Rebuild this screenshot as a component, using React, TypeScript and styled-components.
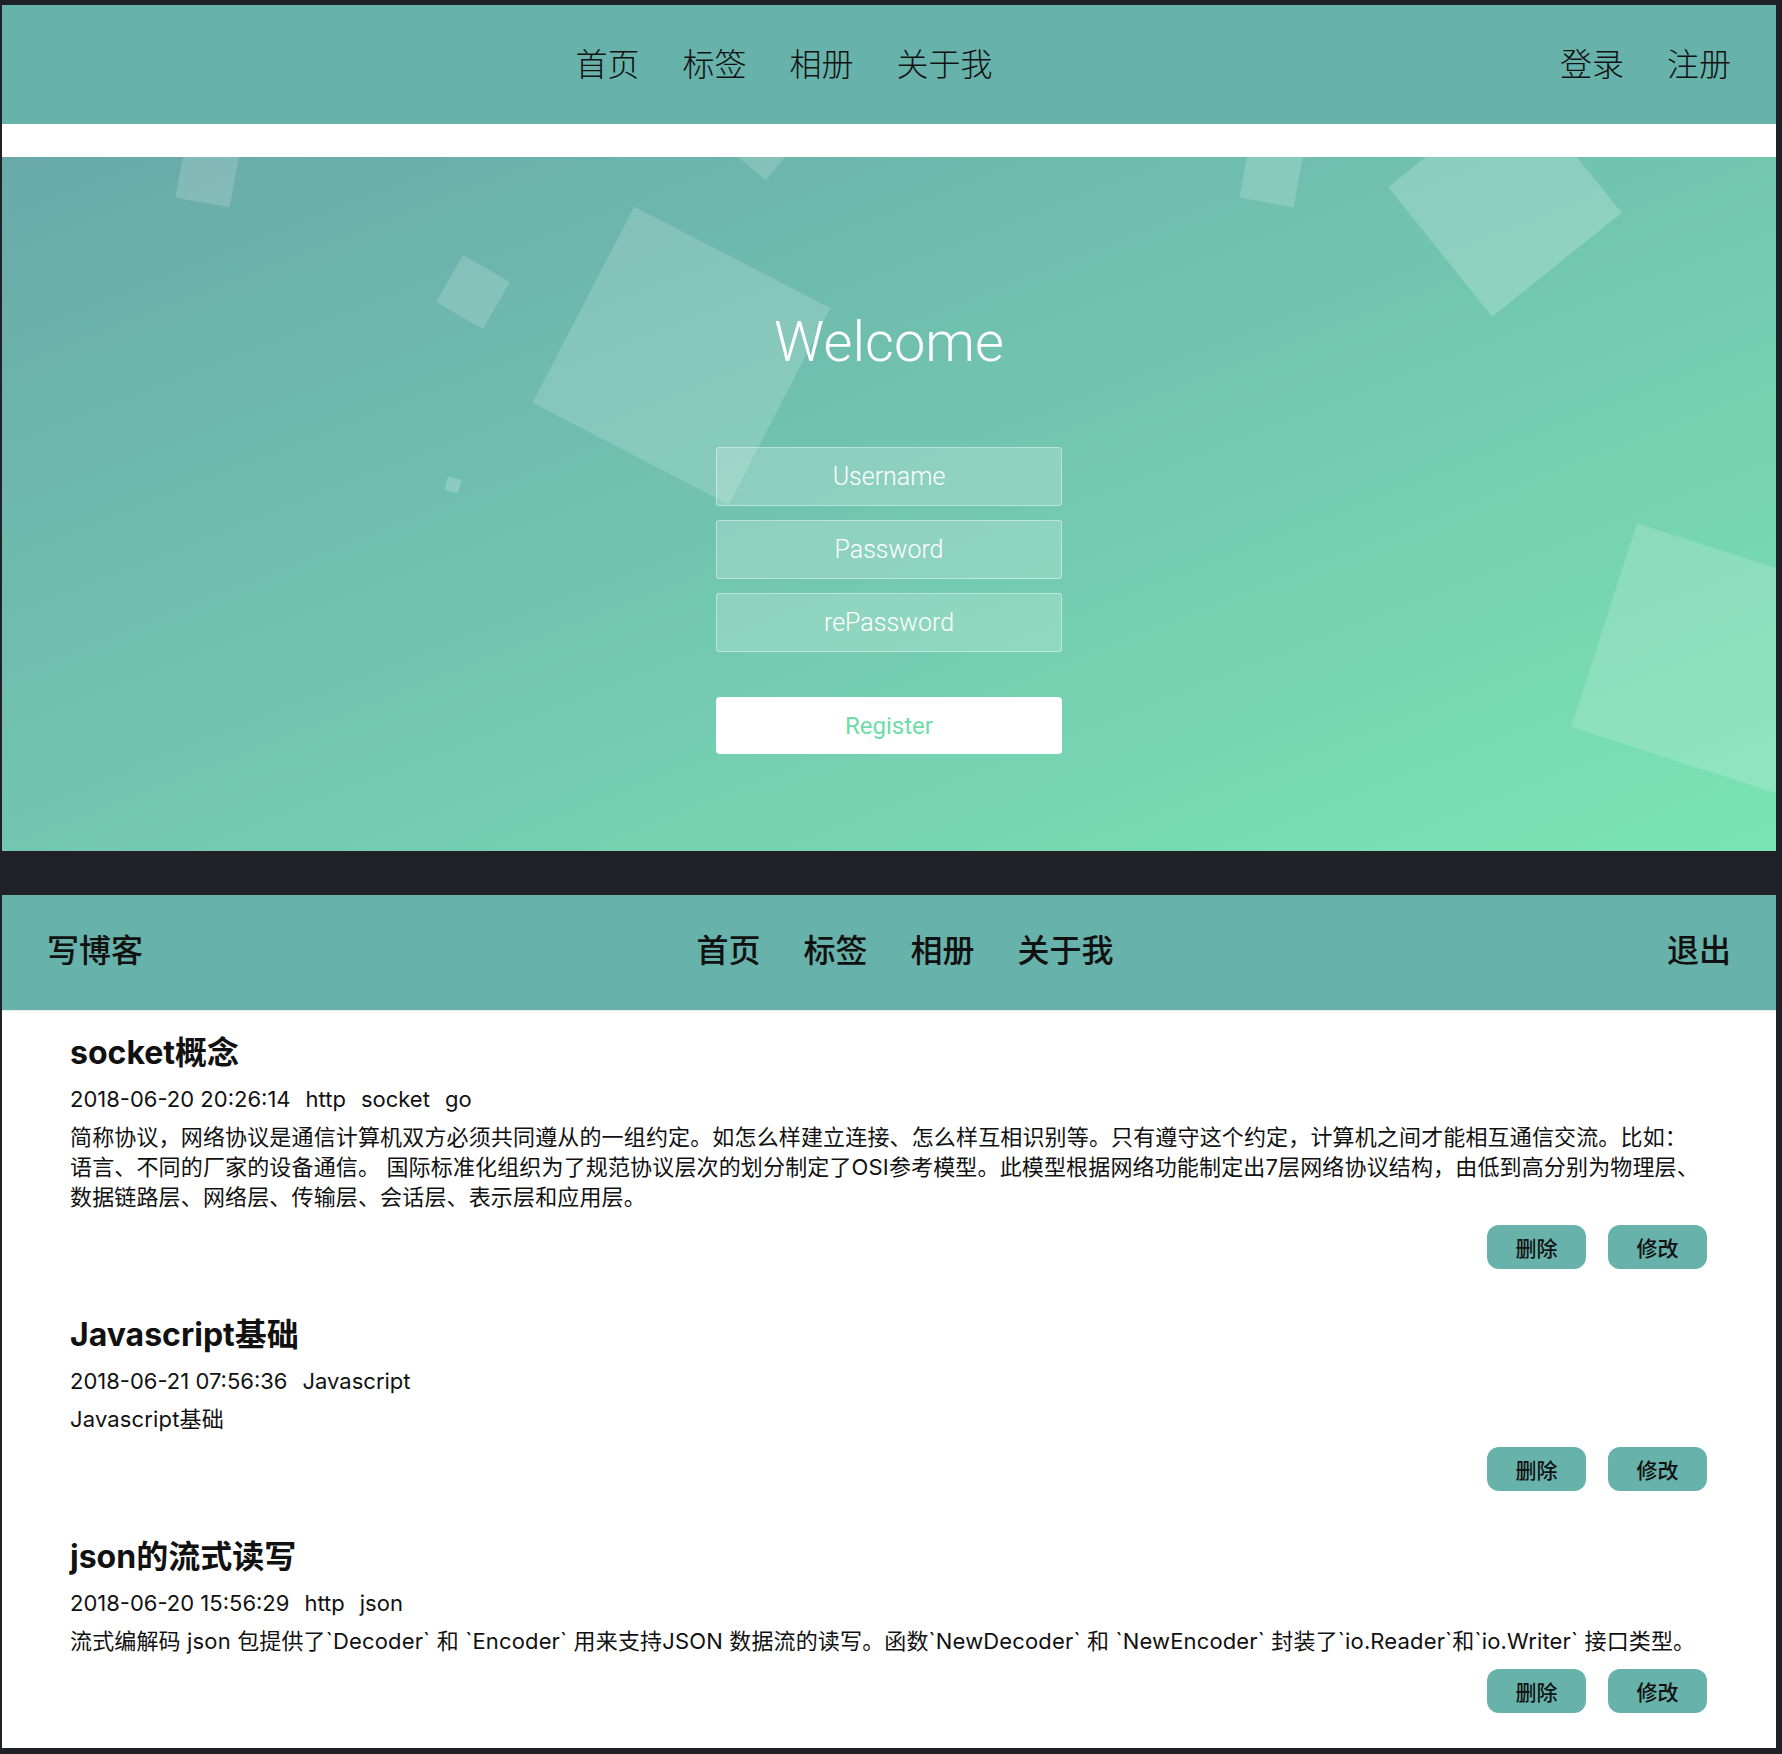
import React from "react";
import styled, { createGlobalStyle } from "styled-components";

const GlobalStyle = createGlobalStyle`
  html, body {
    margin: 0;
    padding: 0;
    background: #1f2126;
  }
  body {
    font-family: Inter, "Noto Sans CJK SC", sans-serif;
  }
  * {
    box-sizing: border-box;
  }
`;

const Page = styled.div`
  width: 1782px;
  display: flex;
  flex-direction: column;
  gap: 44px;
  padding: 5px 6px 6px 2px;
`;

const Screen = styled.section`
  display: flex;
  flex-direction: column;
  background: #ffffff;
`;

const Nav = styled.nav<{ $h: number; $weight: number; $lift: number }>`
  height: ${(p) => p.$h}px;
  display: flex;
  align-items: center;
  gap: 39px;
  padding: 0 45px ${(p) => p.$lift}px;
  background: #67b2aa;
  font-family: "Noto Sans CJK SC", sans-serif;
  font-size: 32px;
  font-weight: ${(p) => p.$weight};
  color: #111;
`;

const NavCenter = styled.div`
  flex: 1;
  display: flex;
  justify-content: center;
  gap: 43px;
`;

const NavSide = styled.div`
  display: flex;
  gap: 43px;
`;

const NavLink = styled.a`
  color: inherit;
  text-decoration: none;
  line-height: 1;
  white-space: nowrap;
`;

const Hero = styled.div`
  position: relative;
  overflow: hidden;
  height: 694px;
  margin-top: 33px;
  display: flex;
  flex-direction: column;
  align-items: center;
  padding-top: 157px;
  background: linear-gradient(to bottom right, #69a9aa 0%, #7be4b4 100%);
`;

const Shape = styled.span<{ $x: number; $y: number; $s: number; $r: number; $a?: number }>`
  position: absolute;
  display: block;
  left: ${(p) => p.$x - p.$s / 2}px;
  top: ${(p) => p.$y - p.$s / 2}px;
  width: ${(p) => p.$s}px;
  height: ${(p) => p.$s}px;
  transform: rotate(${(p) => p.$r}deg);
  background: rgba(255, 255, 255, ${(p) => p.$a ?? 0.16});
`;

const Welcome = styled.h1`
  position: relative;
  margin: 0;
  font-family: Roboto, "Liberation Sans", sans-serif;
  font-weight: 300;
  font-size: 56px;
  line-height: 57px;
  color: #ffffff;
`;

const Form = styled.form`
  position: relative;
  margin-top: 76px;
  width: 346px;
  display: flex;
  flex-direction: column;
  gap: 14px;
`;

const Field = styled.input`
  height: 59px;
  width: 100%;
  border: 1px solid rgba(255, 255, 255, 0.4);
  border-radius: 3px;
  background: rgba(255, 255, 255, 0.2);
  text-align: center;
  font-family: Roboto, "Liberation Sans", sans-serif;
  font-weight: 300;
  font-size: 25px;
  color: #ffffff;
  outline: none;
  &::placeholder {
    color: #ffffff;
    opacity: 1;
  }
`;

const RegisterButton = styled.button`
  margin-top: 31px;
  height: 57px;
  width: 100%;
  border: none;
  border-radius: 4px;
  background: #ffffff;
  color: #6cdcaa;
  font-family: Roboto, "Liberation Sans", sans-serif;
  font-weight: 400;
  font-size: 24px;
`;

const PostList = styled.main`
  display: flex;
  flex-direction: column;
  gap: 46px;
  padding: 22px 69px 35px 68px;
  border-top: 1px solid #e3efee;
  color: #111;
`;

const Post = styled.article`
  display: flex;
  flex-direction: column;
`;

const PostTitle = styled.h2`
  margin: 0;
  font-size: 32px;
  font-weight: 700;
  line-height: 40px;
`;

const Meta = styled.div`
  margin-top: 11px;
  display: flex;
  gap: 15px;
  font-size: 22px;
  line-height: 30px;
`;

const Body = styled.p`
  margin: 8px 0 0;
  font-size: 22px;
  line-height: 30px;
  letter-spacing: 0.15px;
  white-space: nowrap;
`;

const Actions = styled.div`
  margin-top: 13px;
  display: flex;
  justify-content: flex-end;
  gap: 22px;
`;

const ActionButton = styled.button`
  width: 99px;
  height: 44px;
  border: none;
  border-radius: 12px;
  background: #67b2aa;
  color: #111;
  font-family: "Noto Sans CJK SC", sans-serif;
  font-size: 21px;
  font-weight: 500;
  line-height: 1;
`;

const shapes = [
  { x: 205, y: 18, s: 55, r: 10.5, a: 0.17 },
  { x: 760, y: -19, s: 60, r: 40, a: 0.16 },
  { x: 679, y: 198, s: 221, r: 27.4, a: 0.16 },
  { x: 471, y: 135, s: 54, r: 30, a: 0.17 },
  { x: 451, y: 328, s: 14, r: 15, a: 0.2 },
  { x: 1269, y: 18, s: 55, r: 10.5, a: 0.17 },
  { x: 1503, y: 43, s: 166, r: 51.3, a: 0.2 },
  { x: 1704, y: 501, s: 214, r: 17.9, a: 0.16 },
];

type PostData = {
  title: string;
  meta: string[];
  lines: string[];
};

const posts: PostData[] = [
  {
    title: "socket概念",
    meta: ["2018-06-20 20:26:14", "http", "socket", "go"],
    lines: [
      "简称协议，网络协议是通信计算机双方必须共同遵从的一组约定。如怎么样建立连接、怎么样互相识别等。只有遵守这个约定，计算机之间才能相互通信交流。比如：",
      "语言、不同的厂家的设备通信。 国际标准化组织为了规范协议层次的划分制定了OSI参考模型。此模型根据网络功能制定出7层网络协议结构，由低到高分别为物理层、",
      "数据链路层、网络层、传输层、会话层、表示层和应用层。",
    ],
  },
  {
    title: "Javascript基础",
    meta: ["2018-06-21 07:56:36", "Javascript"],
    lines: ["Javascript基础"],
  },
  {
    title: "json的流式读写",
    meta: ["2018-06-20 15:56:29", "http", "json"],
    lines: [
      "流式编解码 json 包提供了`Decoder` 和 `Encoder` 用来支持JSON 数据流的读写。函数`NewDecoder` 和 `NewEncoder` 封装了`io.Reader`和`io.Writer` 接口类型。",
    ],
  },
];

const mainLinks = ["首页", "标签", "相册", "关于我"];

export default function App() {
  return (
    <>
      <GlobalStyle />
      <Page>
        <Screen>
          <Nav $h={119} $weight={300} $lift={5}>
            <NavCenter>
              {mainLinks.map((l) => (
                <NavLink key={l} href="#">
                  {l}
                </NavLink>
              ))}
            </NavCenter>
            <NavSide>
              <NavLink href="#">登录</NavLink>
              <NavLink href="#">注册</NavLink>
            </NavSide>
          </Nav>
          <Hero>
            {shapes.map((s, i) => (
              <Shape key={i} $x={s.x} $y={s.y} $s={s.s} $r={s.r} $a={s.a} />
            ))}
            <Welcome>Welcome</Welcome>
            <Form onSubmit={(e) => e.preventDefault()}>
              <Field type="text" placeholder="Username" />
              <Field type="password" placeholder="Password" />
              <Field type="password" placeholder="rePassword" />
              <RegisterButton type="submit">Register</RegisterButton>
            </Form>
          </Hero>
        </Screen>
        <Screen>
          <Nav $h={115} $weight={500} $lift={9}>
            <NavSide>
              <NavLink href="#">写博客</NavLink>
            </NavSide>
            <NavCenter>
              {mainLinks.map((l) => (
                <NavLink key={l} href="#">
                  {l}
                </NavLink>
              ))}
            </NavCenter>
            <NavSide>
              <NavLink href="#">退出</NavLink>
            </NavSide>
          </Nav>
          <PostList>
            {posts.map((p) => (
              <Post key={p.title}>
                <PostTitle>{p.title}</PostTitle>
                <Meta>
                  {p.meta.map((m) => (
                    <span key={m}>{m}</span>
                  ))}
                </Meta>
                <Body>
                  {p.lines.map((line, i) => (
                    <React.Fragment key={i}>
                      {i > 0 && <br />}
                      {line}
                    </React.Fragment>
                  ))}
                </Body>
                <Actions>
                  <ActionButton type="button">删除</ActionButton>
                  <ActionButton type="button">修改</ActionButton>
                </Actions>
              </Post>
            ))}
          </PostList>
        </Screen>
      </Page>
    </>
  );
}
